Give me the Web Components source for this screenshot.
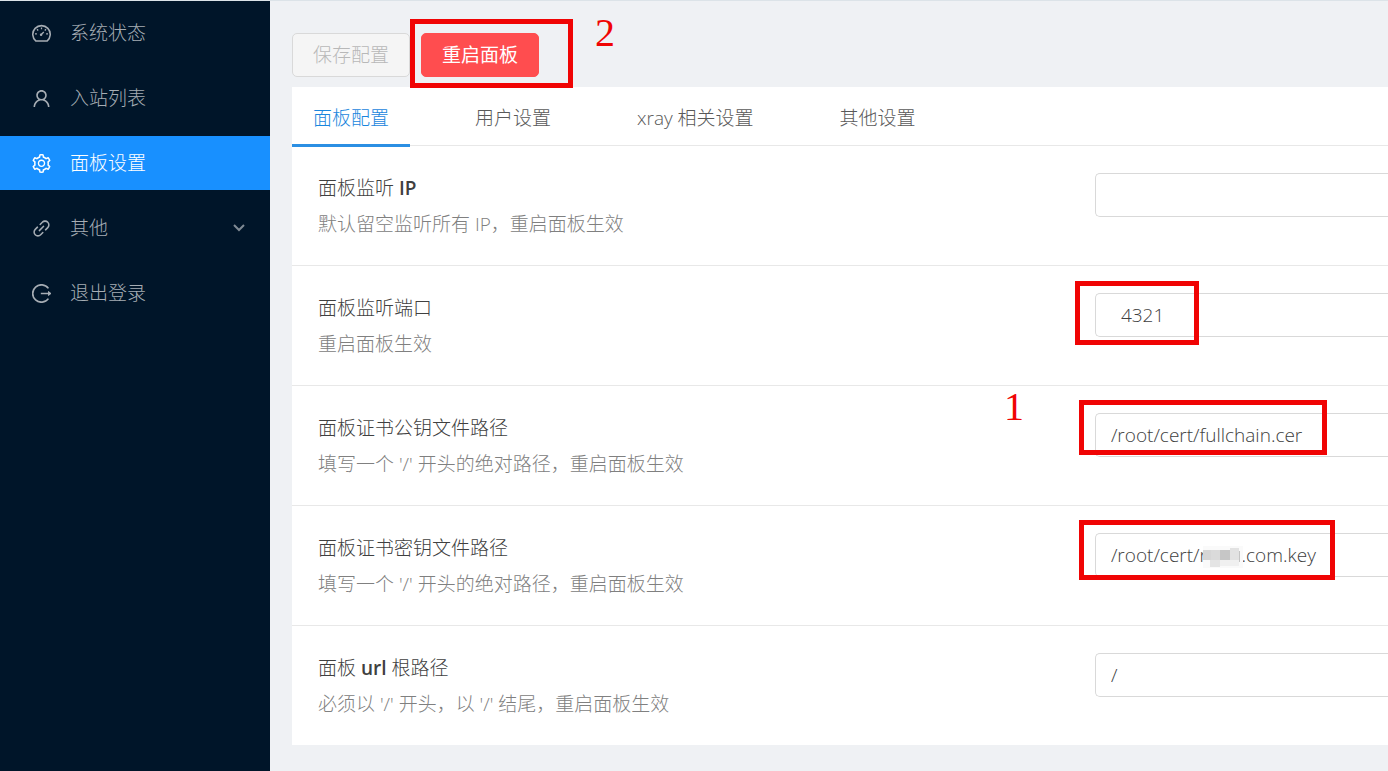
<!DOCTYPE html>
<html lang="zh-CN">
<head>
<meta charset="utf-8">
<title>面板设置</title>
<style>
    body {
        margin: 0;
        background: #eff1f4;
        color: #595959;
        font-family: "Open Sans", "Noto Sans CJK SC", sans-serif;
        font-size: 19px;
        font-weight: 300;
        line-height: 30px;
    }
    b {
        font-weight: 600;
    }
</style>
</head>
<body>
<panel-layout>
    <side-menu slot="aside">
        <menu-item icon="dashboard">系统状态</menu-item>
        <menu-item icon="user">入站列表</menu-item>
        <menu-item icon="setting" active>面板设置</menu-item>
        <menu-item icon="link" submenu>其他</menu-item>
        <menu-item icon="logout">退出登录</menu-item>
    </side-menu>

    <tool-bar>
        <panel-button disabled>保存配置</panel-button>
        <panel-button danger>重启面板
            <red-frame slot="mark" style="--x: -11px; --y: -14px; --w: 163px; --h: 69px"></red-frame>
            <red-number slot="mark" style="--x: 174px; --y: -22px">2</red-number>
        </panel-button>
    </tool-bar>

    <settings-card>
        <tab-bar slot="tabs">
            <tab-item active>面板配置</tab-item>
            <tab-item>用户设置</tab-item>
            <tab-item>xray 相关设置</tab-item>
            <tab-item>其他设置</tab-item>
        </tab-bar>
        <setting-row>
            <span slot="title">面板监听 <b>IP</b></span>
            <span slot="desc">默认留空监听所有 IP，重启面板生效</span>
        </setting-row>
        <setting-row value="4321" type="number">
            <span slot="title">面板监听端口</span>
            <span slot="desc">重启面板生效</span>
            <red-frame slot="mark" style="--x: -20px; --y: -12px; --w: 124px; --h: 64px"></red-frame>
        </setting-row>
        <setting-row value="/root/cert/fullchain.cer">
            <span slot="title">面板证书公钥文件路径</span>
            <span slot="desc">填写一个 '/' 开头的绝对路径，重启面板生效</span>
            <red-frame slot="mark" style="--x: -16px; --y: -13px; --w: 248px; --h: 55px"></red-frame>
            <red-number slot="mark" style="--x: -91px; --y: -28px">1</red-number>
        </setting-row>
        <setting-row value="/root/cert/r&nbsp;&nbsp;&nbsp;&nbsp;&nbsp;&nbsp;&nbsp;.com.key">
            <span slot="title">面板证书密钥文件路径</span>
            <span slot="desc">填写一个 '/' 开头的绝对路径，重启面板生效</span>
            <mosaic-patch slot="mark"></mosaic-patch>
            <red-frame slot="mark" style="--x: -16px; --y: -13px; --w: 256px; --h: 60px"></red-frame>
        </setting-row>
        <setting-row value="/">
            <span slot="title">面板 <b>url</b> 根路径</span>
            <span slot="desc">必须以 '/' 开头，以 '/' 结尾，重启面板生效</span>
        </setting-row>
    </settings-card>
</panel-layout>

<script>
const ICONS = {
    dashboard: `<g fill="none" stroke="currentColor" stroke-width="72" stroke-linejoin="round">
        <path d="M250 870a412 412 0 1 1 524 0z"/>
        <path d="M512 225v90M300 310l58 58M724 310l-58 58M205 530h90M729 530h90" stroke-width="60"/>
        <path d="M490 570l130-130" stroke-width="66"/></g>
        <circle cx="492" cy="568" r="58"/>`,
    user: `<path d="M858.5 763.6a374 374 0 0 0-80.6-119.5 375.63 375.63 0 0 0-119.5-80.6c-.4-.2-.8-.3-1.2-.5C719.5 518 760 444.7 760 362c0-137-111-248-248-248S264 225 264 362c0 82.7 40.5 156 102.8 201.1-.4.2-.8.3-1.2.5-44.8 18.9-85 46-119.5 80.6a375.63 375.63 0 0 0-80.6 119.5A371.7 371.7 0 0 0 136 901.8a8 8 0 0 0 8 8.2h60c4.4 0 7.9-3.5 8-7.8 2-77.2 33-149.5 87.8-204.3 56.7-56.7 132-87.9 212.2-87.9s155.5 31.2 212.2 87.9C779 752.7 810 825 812 902.2c.1 4.4 3.6 7.8 8 7.8h60a8 8 0 0 0 8-8.2c-1-47.8-10.9-94.3-29.5-138.2zM512 534c-45.9 0-89.1-17.9-121.6-50.4S340 407.9 340 362c0-45.9 17.9-89.1 50.4-121.6S466.1 190 512 190s89.1 17.9 121.6 50.4S684 316.1 684 362c0 45.9-17.9 89.1-50.4 121.6S557.9 534 512 534z"/>`,
    setting: `<path d="M924.8 625.7l-65.5-56c3.1-19 4.7-38.4 4.7-57.8s-1.6-38.8-4.7-57.8l65.5-56a32.03 32.03 0 0 0 9.3-35.2l-.9-2.6a443.74 443.74 0 0 0-79.7-137.9l-1.8-2.1a32.12 32.12 0 0 0-35.1-9.5l-81.3 28.9c-30-24.6-63.5-44-99.7-57.6l-15.7-85a32.05 32.05 0 0 0-25.8-25.7l-2.7-.5c-52.1-9.4-106.9-9.4-159 0l-2.7.5a32.05 32.05 0 0 0-25.8 25.7l-15.8 85.4a351.86 351.86 0 0 0-99 57.4l-81.9-29.1a32 32 0 0 0-35.1 9.5l-1.8 2.1a446.02 446.02 0 0 0-79.7 137.9l-.9 2.6c-4.5 12.5-.8 26.5 9.3 35.2l66.3 56.6c-3.1 18.8-4.6 38-4.6 57.1 0 19.2 1.5 38.4 4.6 57.1L99 625.5a32.03 32.03 0 0 0-9.3 35.2l.9 2.6c18.1 50.4 44.9 96.9 79.7 137.9l1.8 2.1a32.12 32.12 0 0 0 35.1 9.5l81.9-29.1c29.8 24.5 63.1 43.9 99 57.4l15.8 85.4a32.05 32.05 0 0 0 25.8 25.7l2.7.5a449.4 449.4 0 0 0 159 0l2.7-.5a32.05 32.05 0 0 0 25.8-25.7l15.7-85a350 350 0 0 0 99.7-57.6l81.3 28.9a32 32 0 0 0 35.1-9.5l1.8-2.1c34.8-41.1 61.6-87.5 79.7-137.9l.9-2.6c4.5-12.3.8-26.3-9.3-35zM788.3 465.9c2.5 15.1 3.8 30.6 3.8 46.1s-1.3 31-3.8 46.1l-6.6 40.1 74.7 63.9a370.03 370.03 0 0 1-42.6 73.6L721 702.8l-31.4 25.8c-23.9 19.6-50.5 35-79.3 45.8l-38.1 14.3-17.9 97a377.5 377.5 0 0 1-85 0l-17.9-97.2-37.8-14.5c-28.5-10.8-55-26.2-78.7-45.7l-31.4-25.9-93.4 33.2c-17-22.9-31.2-47.6-42.6-73.6l75.5-64.5-6.5-40c-2.4-14.9-3.7-30.3-3.7-45.5 0-15.3 1.2-30.6 3.7-45.5l6.5-40-75.5-64.5c11.3-26.1 25.6-50.7 42.6-73.6l93.4 33.2 31.4-25.9c23.7-19.5 50.2-34.9 78.7-45.7l37.9-14.3 17.9-97.2c28.1-3.2 56.8-3.2 85 0l17.9 97 38.1 14.3c28.7 10.8 55.4 26.2 79.3 45.8l31.4 25.8 92.8-32.9c17 22.9 31.2 47.6 42.6 73.6L781.8 426l6.5 39.9zM512 326c-97.2 0-176 78.8-176 176s78.8 176 176 176 176-78.8 176-176-78.8-176-176-176zm79.2 255.2A111.6 111.6 0 0 1 512 614c-29.9 0-58-11.7-79.2-32.8A111.6 111.6 0 0 1 400 502c0-29.9 11.7-58 32.8-79.2C454 401.6 482.1 390 512 390c29.9 0 58 11.6 79.2 32.8A111.6 111.6 0 0 1 624 502c0 29.9-11.7 58-32.8 79.2z"/>`,
    link: `<path d="M574 665.4a8.03 8.03 0 0 0-11.3 0L446.5 781.6c-53.8 53.8-144.6 59.5-204 0-59.5-59.5-53.8-150.2 0-204l116.2-116.2c3.1-3.1 3.1-8.2 0-11.3l-39.8-39.8a8.03 8.03 0 0 0-11.3 0L191.4 526.5c-84.6 84.6-84.6 221.5 0 306s221.5 84.6 306 0l116.2-116.2c3.1-3.1 3.1-8.2 0-11.3L574 665.4zm258.6-474c-84.6-84.6-221.5-84.6-306 0L410.3 307.6a8.03 8.03 0 0 0 0 11.3l39.7 39.7c3.1 3.1 8.2 3.1 11.3 0l116.2-116.2c53.8-53.8 144.6-59.5 204 0 59.5 59.5 53.8 150.2 0 204L665.3 562.6a8.03 8.03 0 0 0 0 11.3l39.8 39.8c3.1 3.1 8.2 3.1 11.3 0l116.2-116.2c84.5-84.6 84.5-221.5 0-306.1zM610.1 372.3a8.03 8.03 0 0 0-11.3 0L372.3 598.7a8.03 8.03 0 0 0 0 11.3l39.6 39.6c3.1 3.1 8.2 3.1 11.3 0l226.4-226.4c3.1-3.1 3.1-8.2 0-11.3l-39.5-39.6z"/>`,
    logout: `<path d="M838 270a410 410 0 1 0 0 484" fill="none" stroke="currentColor" stroke-width="78"/>
        <path d="M480 478h340v-76c0-7 8-11 14-6l141 110a8 8 0 0 1 0 12L834 628c-6 5-14 1-14-6v-76H480z"/>`
};

class PanelLayout extends HTMLElement {
    constructor() {
        super();
        this.attachShadow({ mode: 'open' });
    }

    connectedCallback() {
        this.shadowRoot.innerHTML = `
            <style>
                :host {
                    display: flex;
                    box-sizing: border-box;
                    min-height: 100vh;
                    border-top: 1px solid #dce3e8;
                }
                main {
                    flex: 1;
                    min-width: 0;
                    padding: 32px 0 26px 22px;
                }
            </style>
            <slot name="aside"></slot>
            <main><slot></slot></main>
        `;
    }
}

class SideMenu extends HTMLElement {
    constructor() {
        super();
        this.attachShadow({ mode: 'open' });
    }

    connectedCallback() {
        this.shadowRoot.innerHTML = `
            <style>
                :host {
                    display: block;
                    flex: none;
                    width: 270px;
                    background: #001529;
                }
                nav {
                    display: flex;
                    flex-direction: column;
                    gap: 11px;
                    padding-top: 5px;
                }
            </style>
            <nav><slot></slot></nav>
        `;
    }
}

class MenuItem extends HTMLElement {
    constructor() {
        super();
        this.attachShadow({ mode: 'open' });
    }

    connectedCallback() {
        const submenu = this.hasAttribute('submenu');
        const tag = submenu ? 'button' : 'a';
        const attrs = submenu ? 'type="button" aria-expanded="false"' : 'href="#"';
        this.shadowRoot.innerHTML = `
            <style>
                :host {
                    display: block;
                    color: #a6adb4;
                }
                :host([active]) {
                    background: #1890ff;
                    color: #fff;
                }
                a, button {
                    display: flex;
                    align-items: center;
                    box-sizing: border-box;
                    width: 100%;
                    height: 54px;
                    padding: 0 25px 0 32px;
                    border: 0;
                    background: none;
                    color: inherit;
                    font: inherit;
                    text-align: left;
                    text-decoration: none;
                    cursor: pointer;
                }
                .icon {
                    width: 19px;
                    height: 19px;
                    margin-right: 19px;
                    fill: currentColor;
                }
                .label {
                    flex: 1;
                }
                .arrow {
                    width: 12px;
                    height: 8px;
                    fill: none;
                    stroke: #7f8a94;
                    stroke-width: 2;
                }
            </style>
            <${tag} ${attrs}>
                <svg class="icon" viewBox="64 64 896 896" aria-hidden="true">${ICONS[this.getAttribute('icon')]}</svg>
                <span class="label"><slot></slot></span>
                ${submenu ? '<svg class="arrow" viewBox="0 0 12 8" aria-hidden="true"><path d="M1 1l5 5 5-5"/></svg>' : ''}
            </${tag}>
        `;
    }
}

class ToolBar extends HTMLElement {
    constructor() {
        super();
        this.attachShadow({ mode: 'open' });
    }

    connectedCallback() {
        this.shadowRoot.innerHTML = `
            <style>
                :host {
                    display: flex;
                    gap: 11px;
                    margin-bottom: 10px;
                }
            </style>
            <slot></slot>
        `;
    }
}

class PanelButton extends HTMLElement {
    constructor() {
        super();
        this.attachShadow({ mode: 'open' });
    }

    connectedCallback() {
        this.shadowRoot.innerHTML = `
            <style>
                :host {
                    display: block;
                    position: relative;
                }
                button {
                    height: 44px;
                    padding: 0 20px;
                    border: 1px solid #d9d9d9;
                    border-radius: 5px;
                    background: #f5f5f5;
                    color: #b8b8b8;
                    font: inherit;
                }
                :host([danger]) button {
                    border-color: #ff4d4f;
                    background: #ff4d4f;
                    color: #fff;
                    font-weight: 400;
                    cursor: pointer;
                }
            </style>
            <button type="button" ${this.hasAttribute('disabled') ? 'disabled' : ''}><slot></slot></button>
            <slot name="mark"></slot>
        `;
    }
}

class SettingsCard extends HTMLElement {
    constructor() {
        super();
        this.attachShadow({ mode: 'open' });
    }

    connectedCallback() {
        this.shadowRoot.innerHTML = `
            <style>
                :host {
                    display: block;
                    background: #fff;
                }
            </style>
            <slot name="tabs"></slot>
            <form><slot></slot></form>
        `;
    }
}

class TabBar extends HTMLElement {
    constructor() {
        super();
        this.attachShadow({ mode: 'open' });
    }

    connectedCallback() {
        this.shadowRoot.innerHTML = `
            <style>
                :host {
                    display: flex;
                    gap: 44px;
                    height: 58px;
                    border-bottom: 1px solid #e8e8e8;
                }
            </style>
            <slot></slot>
        `;
        this.setAttribute('role', 'tablist');
        this.addEventListener('click', this.handleClick.bind(this));
    }

    handleClick(event) {
        const tab = event.target.closest('tab-item');
        if (!tab) return;
        this.querySelectorAll('tab-item').forEach(item => item.toggleAttribute('active', item === tab));
    }
}

class TabItem extends HTMLElement {
    constructor() {
        super();
        this.attachShadow({ mode: 'open' });
    }

    connectedCallback() {
        this.shadowRoot.innerHTML = `
            <style>
                :host {
                    display: block;
                }
                button {
                    height: 60px;
                    padding: 5px 21px 0;
                    border: 0;
                    border-bottom: 3px solid transparent;
                    background: none;
                    color: inherit;
                    font: inherit;
                    cursor: pointer;
                }
                :host([active]) button {
                    border-color: #2b8fe3;
                    color: #1a86dd;
                }
            </style>
            <button type="button" role="tab"><slot></slot></button>
        `;
    }
}

class SettingRow extends HTMLElement {
    constructor() {
        super();
        this.attachShadow({ mode: 'open' });
    }

    connectedCallback() {
        this.shadowRoot.innerHTML = `
            <style>
                :host {
                    display: grid;
                    grid-template-columns: minmax(0, 63fr) minmax(0, 23fr);
                    padding: 27px 0 26px;
                    border-bottom: 1px solid #e8e8e8;
                }
                :host(:last-of-type) {
                    border-bottom: 0;
                }
                .meta {
                    padding-left: 26px;
                }
                label {
                    display: block;
                    margin-bottom: 6px;
                    color: #404040;
                }
                .desc {
                    color: #808080;
                }
                .field {
                    position: relative;
                }
                input {
                    display: block;
                    box-sizing: border-box;
                    width: 100%;
                    height: 44px;
                    padding: 0 15px;
                    border: 1px solid #d9d9d9;
                    border-right: 0;
                    border-radius: 5px 0 0 5px;
                    background: #fff;
                    color: #404040;
                    font: inherit;
                    outline: none;
                }
                input[type="number"] {
                    padding-left: 25px;
                    appearance: textfield;
                }
            </style>
            <div class="meta">
                <label for="field"><slot name="title"></slot></label>
                <div class="desc"><slot name="desc"></slot></div>
            </div>
            <div class="field">
                <input id="field">
                <slot name="mark"></slot>
            </div>
        `;
        const input = this.shadowRoot.querySelector('input');
        input.type = this.getAttribute('type') || 'text';
        input.value = this.getAttribute('value') || '';
    }
}

// Annotations drawn over the controls
class RedFrame extends HTMLElement {
    constructor() {
        super();
        this.attachShadow({ mode: 'open' });
        this.shadowRoot.innerHTML = `
            <style>
                :host {
                    position: absolute;
                    left: var(--x);
                    top: var(--y);
                    box-sizing: border-box;
                    width: var(--w);
                    height: var(--h);
                    border: 5px solid #f00404;
                    pointer-events: none;
                }
            </style>
        `;
    }
}

class RedNumber extends HTMLElement {
    constructor() {
        super();
        this.attachShadow({ mode: 'open' });
        this.shadowRoot.innerHTML = `
            <style>
                :host {
                    position: absolute;
                    left: var(--x);
                    top: var(--y);
                    color: #f00404;
                    font: 400 40px/44px "Liberation Serif", serif;
                }
            </style>
            <slot></slot>
        `;
    }
}

class MosaicPatch extends HTMLElement {
    constructor() {
        super();
        this.attachShadow({ mode: 'open' });
        this.shadowRoot.innerHTML = `
            <style>
                :host {
                    position: absolute;
                    left: 108px;
                    top: 13px;
                }
                svg {
                    display: block;
                    width: 40px;
                    height: 22px;
                }
            </style>
            <svg viewBox="0 0 40 22" aria-hidden="true">
                <path fill="#fafafa" d="M0 0h40v22H0z"/>
                <path fill="#d6d6d6" d="M0 4h8v10H0z"/>
                <path fill="#dadada" d="M8 4h9v10H8z"/>
                <path fill="#c6c6c6" d="M17 4h10v10H17z"/>
                <path fill="#e2e2e2" d="M27 2h9v12h-9z"/>
                <path fill="#e4e4e4" d="M7 14h10v7H7z"/>
                <path fill="#f0f0f0" d="M17 14h19v6H17z"/>
                <path fill="#c4c4c4" d="M36 5h1v11h-1z"/>
            </svg>
        `;
    }
}

customElements.define('panel-layout', PanelLayout);
customElements.define('side-menu', SideMenu);
customElements.define('menu-item', MenuItem);
customElements.define('tool-bar', ToolBar);
customElements.define('panel-button', PanelButton);
customElements.define('settings-card', SettingsCard);
customElements.define('tab-bar', TabBar);
customElements.define('tab-item', TabItem);
customElements.define('setting-row', SettingRow);
customElements.define('red-frame', RedFrame);
customElements.define('red-number', RedNumber);
customElements.define('mosaic-patch', MosaicPatch);
</script>
</body>
</html>
